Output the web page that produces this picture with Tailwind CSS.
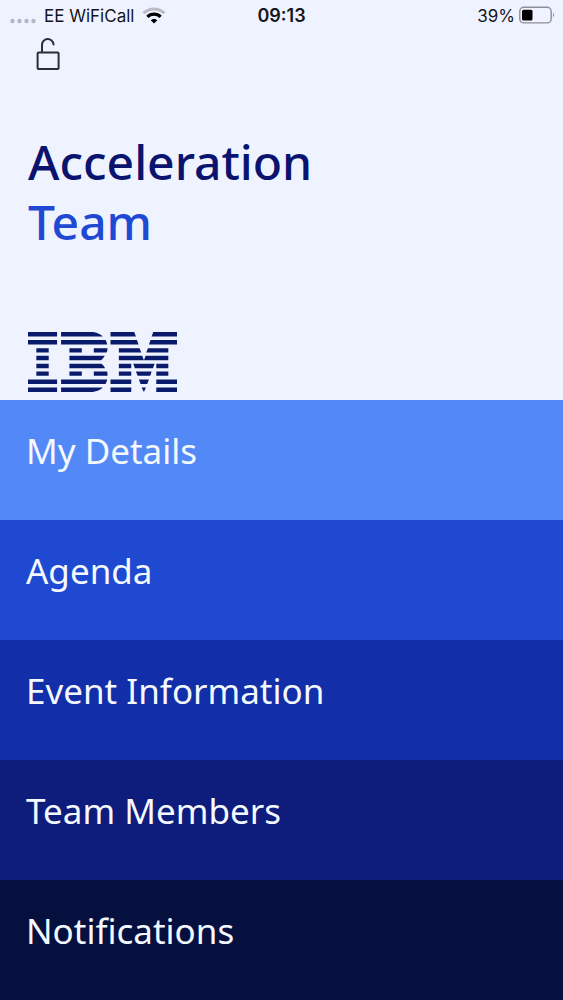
<!DOCTYPE html>
<html lang="en">
<head>
    <meta charset="UTF-8">
    <meta name="viewport" content="width=device-width, initial-scale=1.0">
    <title>Acceleration Team</title>
    <script src="https://cdn.jsdelivr.net/npm/@tailwindcss/browser@4"></script>
</head>
<body class="min-h-screen flex flex-col bg-[#eff3ff] font-['Noto_Sans','Open_Sans',sans-serif]">
    <!-- Status bar -->
    <div class="grid grid-cols-3 items-center h-8 px-2 text-[17px] leading-8 text-[#14161c] font-['Inter','Liberation_Sans',sans-serif]">
        <div class="flex items-center gap-2 whitespace-nowrap">
            <svg class="w-7 h-6 shrink-0" viewBox="0 0 28 24" fill="#b5b7c2">
                <circle cx="4.5" cy="17" r="2.2"/>
                <circle cx="11.5" cy="17" r="2.2"/>
                <circle cx="18.5" cy="17" r="2.2"/>
                <circle cx="25.5" cy="17" r="2.2"/>
            </svg>
            <span>EE WiFiCall</span>
            <svg class="w-6 h-5 shrink-0" viewBox="0 0 24 20" fill="none">
                <path d="M1.5 7.2A15 15 0 0 1 22.5 7.2" stroke="#b9bbc6" stroke-width="3"/>
                <path d="M5.4 10.9A9.2 9.2 0 0 1 18.6 10.9" stroke="#000" stroke-width="3.2"/>
                <path d="M8.7 14.2A4.8 4.8 0 0 1 15.3 14.2L12 17.6Z" fill="#000"/>
            </svg>
        </div>
        <div class="text-center text-lg leading-8 font-semibold">09:13</div>
        <div class="flex items-center justify-end gap-1">
            <span>39%</span>
            <svg class="w-9 h-5" viewBox="0 0 36 20" fill="none">
                <rect x="0.8" y="1.3" width="31.4" height="15.6" rx="4" stroke="#8d8f98" stroke-width="1.4"/>
                <rect x="3" y="3.8" width="10.5" height="10.8" rx="1.5" fill="#000"/>
                <path d="M34 6.5Q36 9 34 11.5Z" fill="#8d8f98"/>
            </svg>
        </div>
    </div>

    <!-- Header -->
    <header class="flex flex-col items-start px-7 pt-1 pb-2">
        <button type="button" aria-label="Unlock" class="ml-2 text-[#2b2d35]">
            <svg class="w-6 h-9" viewBox="0 0 24 36" fill="none" stroke="currentColor" stroke-width="2" stroke-linecap="round">
                <path d="M6 16V9.4A5.6 5.6 0 0 1 17.6 8.4"/>
                <rect x="1.6" y="16.6" width="21" height="16.4" rx="1"/>
            </svg>
        </button>
        <h1 class="mt-15 text-5xl leading-[60px] font-medium text-[#0a146e]">
            Acceleration<br><span class="text-[#1f49d3]">Team</span>
        </h1>
        <svg class="mt-20 w-[149px] h-[60px]" viewBox="24 34 446 179" fill="#0a1a6b" role="img" aria-label="IBM">
            <!-- I -->
            <path d="M24 34H111V47H24ZM24 58H111V71H24ZM49 82H86V95H49ZM49 105H86V118H49ZM49 129H86V142H49ZM49 152H86V165H49ZM24 176H111V189H24ZM24 200H111V213H24Z"/>
            <!-- B -->
            <path d="M123 34H218Q236 36 248 47H123ZM123 58H256Q260 64 261 71H123ZM148 82H185V95H148ZM221 82H262Q262 89 259 95H221ZM148 105H254Q250 112 243 118H148ZM148 129H244Q251 134 255 142H148ZM148 152H185V165H148ZM221 152H261Q262 158 262 165H221ZM123 176H261Q260 183 256 189H123ZM123 200H248Q236 211 218 213H123Z"/>
            <!-- M -->
            <path d="M271 34H342L347 47H271ZM271 58H350L355 71H271ZM296 82H358L363 95H296ZM296 105H366L371 118L376 105H444V118H296ZM296 129H333V142H296ZM296 152H333V165H296ZM271 176H333V189H271ZM271 200H333V213H271Z"/>
            <path d="M399 34H470V47H394ZM391 58H470V71H386ZM383 82H444V95H378ZM408 129H444V142H408ZM408 152H444V165H408ZM408 176H470V189H408ZM408 200H470V213H408ZM339 129H403L398 142H344ZM347 152H394L390 165H352ZM356 176H386L381 189H361ZM364 200H377L371 213Z"/>
        </svg>
    </header>

    <!-- Menu -->
    <nav class="flex-1 flex flex-col text-[35px] leading-10 text-[#f4f8ff]">
        <a href="#details" class="flex-1 min-h-30 px-[26px] pt-[31px] bg-[#5389f6]">My Details</a>
        <a href="#agenda" class="flex-1 min-h-30 px-[26px] pt-[31px] bg-[#1e49d0]">Agenda</a>
        <a href="#event" class="flex-1 min-h-30 px-[26px] pt-[31px] bg-[#122ea8]">Event Information</a>
        <a href="#team" class="flex-1 min-h-30 px-[26px] pt-[31px] bg-[#0e1c7b]">Team Members</a>
        <a href="#notifications" class="flex-1 min-h-30 px-[26px] pt-[31px] bg-[#06103f]">Notifications</a>
    </nav>
</body>
</html>
